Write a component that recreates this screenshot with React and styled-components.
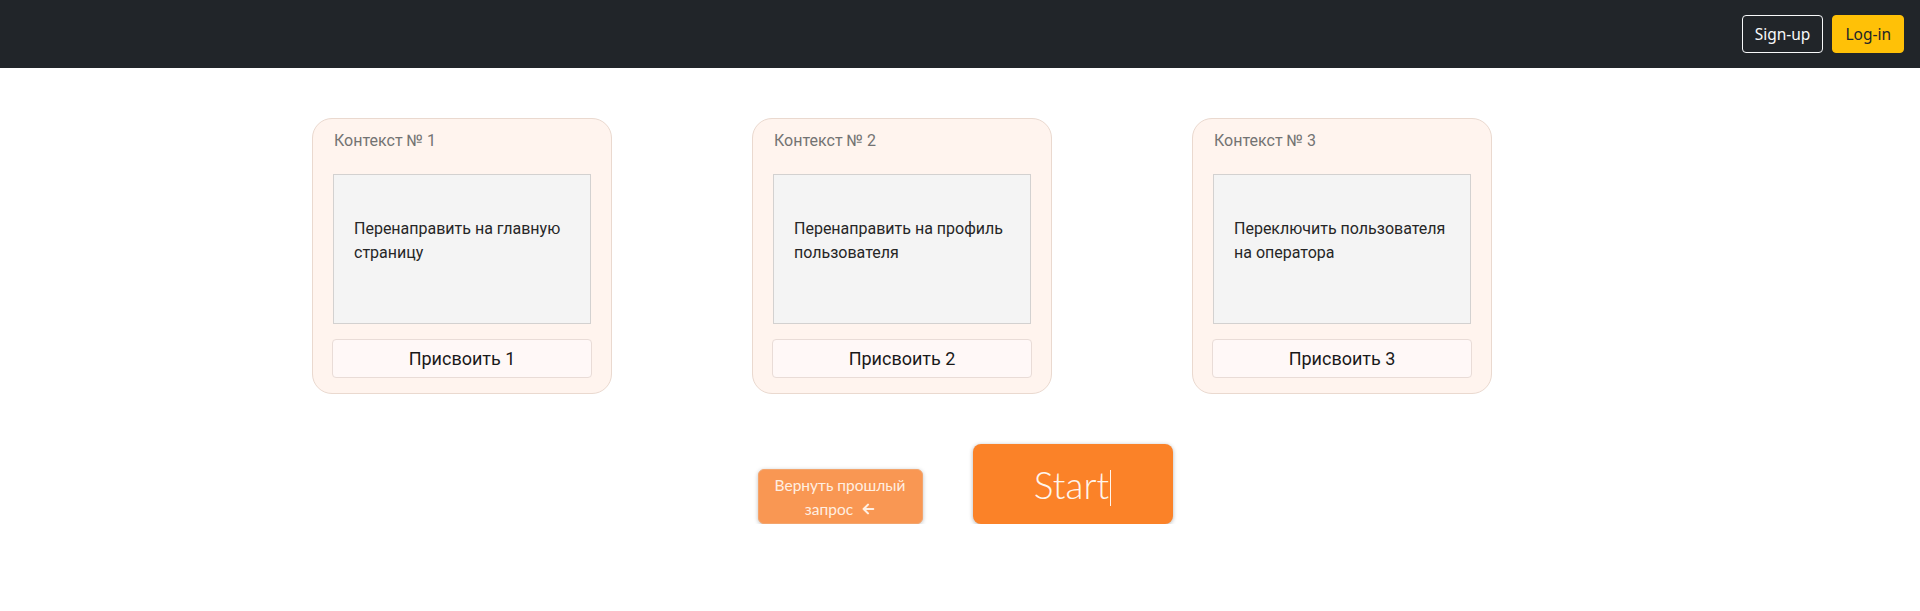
import React from "react";
import styled, { createGlobalStyle } from "styled-components";

const GlobalStyle = createGlobalStyle`
    * { box-sizing: border-box; }
    body {
        margin: 0;
        background: #ffffff;
        font-family: "Noto Sans", "Open Sans", sans-serif;
    }
`;

const NavBar = styled.header`
    height: 68px;
    background: #212529;
    display: flex;
    align-items: center;
    justify-content: flex-end;
    gap: 9px;
    padding: 0 16px;
`;

const NavButton = styled.button`
    height: 38px;
    padding: 0 12px;
    border-radius: 4px;
    font-family: "Noto Sans", sans-serif;
    font-size: 15.5px;
    border: 1px solid ${(p) => (p.$filled ? "#ffc107" : "#f8f9fa")};
    background: ${(p) => (p.$filled ? "#ffc107" : "transparent")};
    color: ${(p) => (p.$filled ? "#212529" : "#f8f9fa")};
`;

const Main = styled.main`
    width: 1320px;
    margin: 0 auto;
    padding: 50px 12px 0;
`;

const CardRow = styled.div`
    display: flex;
    gap: 140px;
`;

const Card = styled.section`
    width: 300px;
    height: 276px;
    background: #fff4ee;
    border: 1px solid #ead9cf;
    border-radius: 20px;
    padding: 11px 20px 0 20px;
    display: flex;
    flex-direction: column;
`;

const CardTitle = styled.div`
    font-family: Roboto, sans-serif;
    font-size: 16px;
    color: #737373;
    line-height: 22px;
    margin-left: 1px;
`;

const ActionBox = styled.div`
    margin-top: 22px;
    height: 150px;
    background: #f4f4f4;
    border: 1px solid #d3d1d0;
    padding: 42px 20px 0;
    font-family: Roboto, sans-serif;
    font-size: 16px;
    line-height: 24px;
    color: #262626;
`;

const AssignButton = styled.button`
    margin-top: 15px;
    width: 260px;
    margin-left: -1px;
    height: 39px;
    background: #fff8f7;
    border: 1px solid #e9dcd7;
    border-radius: 4px;
    font-family: Roboto, sans-serif;
    font-size: 18px;
    color: #1a1a1a;
`;

const Controls = styled.div`
    display: flex;
    justify-content: center;
    align-items: flex-end;
    gap: 50px;
    margin-top: 50px;
    padding-left: 10px;
`;

const BackButton = styled.button`
    width: 165px;
    height: 55px;
    background: #f99753;
    border: 1px solid #f3a56d;
    border-radius: 6px;
    box-shadow: 0 1px 4px rgba(0, 0, 0, 0.25);
    color: #ffefe2;
    font-family: Lato, sans-serif;
    font-size: 15.5px;
    line-height: 24px;
    padding: 0 6px;
`;

const StartButton = styled.button`
    width: 200px;
    height: 80px;
    background: #fb8228;
    border: none;
    border-radius: 8px;
    box-shadow: 0 1px 4px rgba(0, 0, 0, 0.3);
    color: #fff5ec;
    font-family: Lato, sans-serif;
    font-weight: 300;
    font-size: 37px;
    display: flex;
    align-items: center;
    justify-content: center;
    padding-top: 2px;
`;

const Caret = styled.span`
    display: inline-block;
    width: 1px;
    height: 36px;
    background: #fff5ec;
    margin-left: 1px;
    margin-top: 6px;
`;

const Arrow = () => (
    <svg width="14" height="14" viewBox="0 0 16 16" style={{ verticalAlign: "-1px", marginLeft: 8 }}>
        <path d="M14 8H3M8 3L3 8l5 5" stroke="#ffefe2" strokeWidth="2.4" fill="none" strokeLinecap="round" strokeLinejoin="round" />
    </svg>
);

const contexts = [
    { n: 1, text: ["Перенаправить на главную", "страницу"] },
    { n: 2, text: ["Перенаправить на профиль", "пользователя"] },
    { n: 3, text: ["Переключить пользователя", "на оператора"] },
];

const App = () => {
    return (
        <>
            <GlobalStyle />
            <NavBar>
                <NavButton>Sign-up</NavButton>
                <NavButton $filled>Log-in</NavButton>
            </NavBar>
            <Main>
                <CardRow>
                    {contexts.map((c) => (
                        <Card key={c.n}>
                            <CardTitle>Контекст № {c.n}</CardTitle>
                            <ActionBox>
                                {c.text[0]}
                                <br />
                                {c.text[1]}
                            </ActionBox>
                            <AssignButton>Присвоить {c.n}</AssignButton>
                        </Card>
                    ))}
                </CardRow>
                <Controls>
                    <BackButton>
                        Вернуть прошлый запрос
                        <Arrow />
                    </BackButton>
                    <StartButton>
                        Start<Caret />
                    </StartButton>
                </Controls>
            </Main>
        </>
    );
};

export default App;
